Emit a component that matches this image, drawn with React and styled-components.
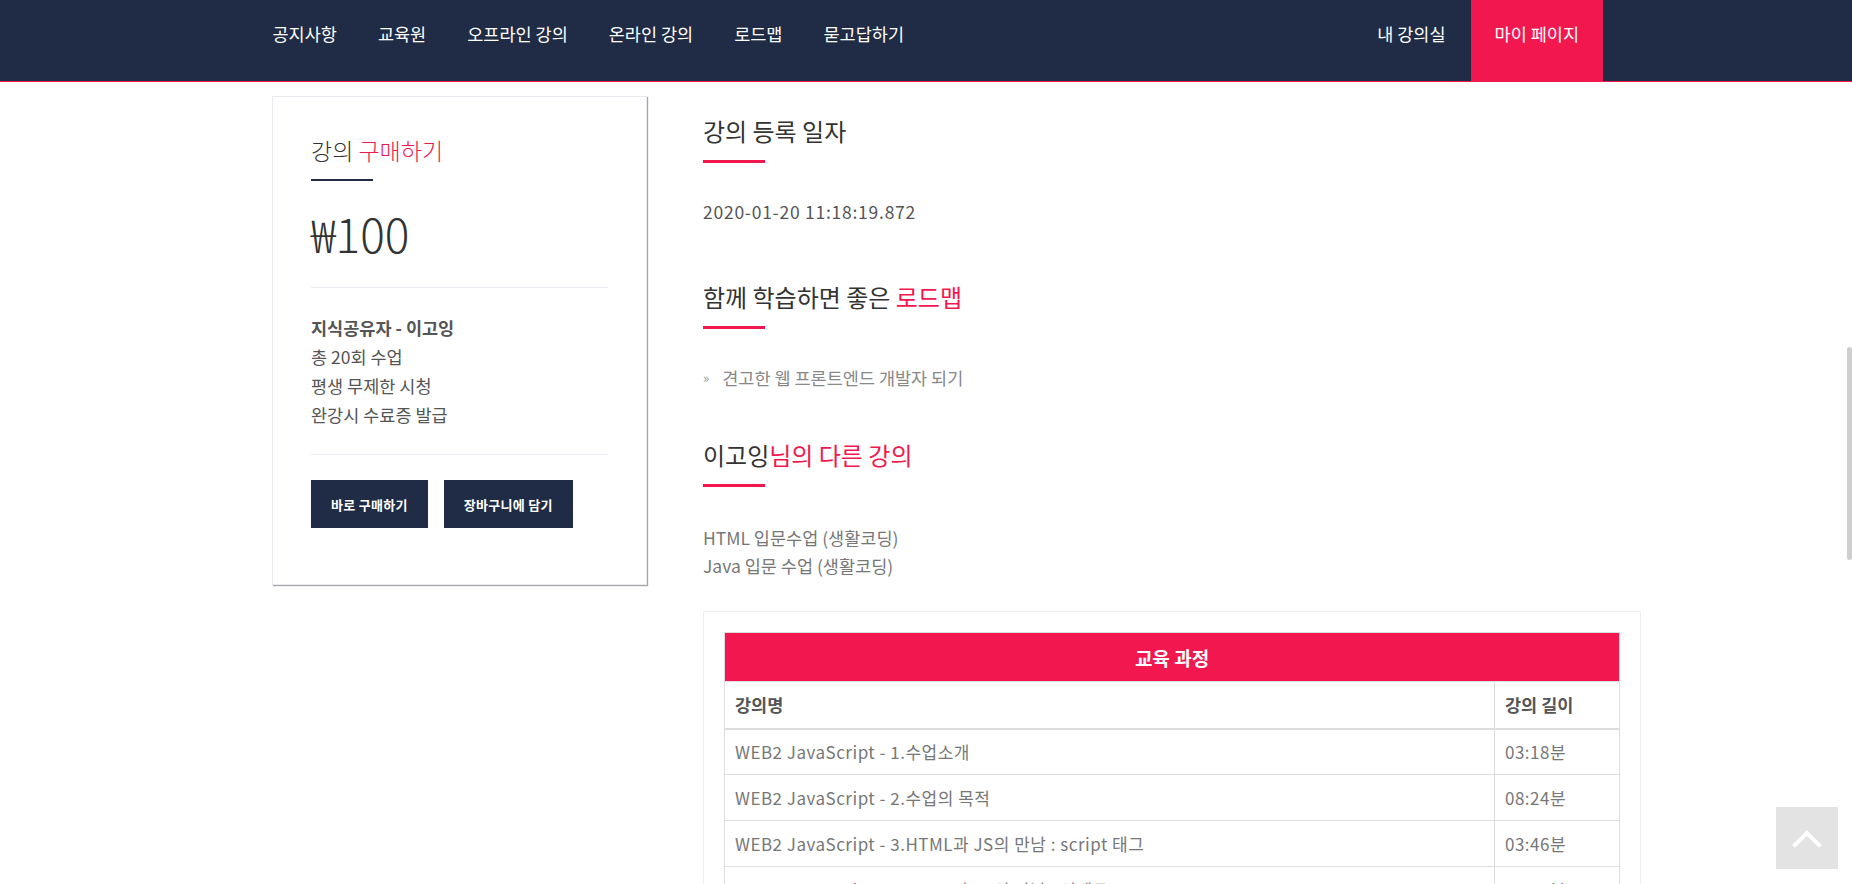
import React from "react";
import styled, { createGlobalStyle } from "styled-components";

const NAVY = "#202c46";
const PINK = "#f2184f";
const FONT = `"Noto Sans CJK KR", "Noto Sans", "Liberation Sans", sans-serif`;

const Global = createGlobalStyle`
  html { scrollbar-width: none; }
  html::-webkit-scrollbar, body::-webkit-scrollbar { width: 0; height: 0; display: none; }
  body {
    margin: 0;
    background: #fff;
    font-family: ${FONT};
    color: #333;
  }
  * { box-sizing: border-box; }
`;

/* ---------- top bar ---------- */
const Header = styled.header`
  height: 82px;
  background: ${NAVY};
  border-bottom: 1px solid ${PINK};
  display: flex;
  justify-content: space-between;
  padding: 0 249px 0 252px;
`;

const Nav = styled.nav`
  display: flex;
  height: 81px;
`;

const NavItem = styled.a`
  display: block;
  height: 81px;
  padding: 22px ${(p) => p.$pad || 20.5}px 0;
  font-size: 17.5px;
  line-height: 24px;
  color: #fff;
  text-decoration: none;
  white-space: nowrap;
  background: ${(p) => (p.$active ? PINK : "transparent")};
  margin-right: ${(p) => (p.$tight ? "5px" : "0")};
`;

/* ---------- page body ---------- */
const Main = styled.main`
  display: flex;
  align-items: flex-start;
  gap: 56px;
  padding: 14px 0 0 272px;
`;

const BuyCard = styled.aside`
  flex: none;
  width: 375px;
  border: 1px solid #e9e9ef;
  box-shadow: 1px 1px 1px rgba(0, 0, 0, 0.35);
  padding: 38px 38px 56px;
  background: #fff;
`;

const CardTitle = styled.h2`
  margin: 0;
  font-size: 23px;
  line-height: 30px;
  font-weight: 300;
  color: #333;
`;

const Accent = styled.span`
  color: ${PINK};
`;

const Bar = styled.div`
  width: 62px;
  height: ${(p) => p.$h || 3}px;
  margin-top: ${(p) => p.$mt || 14}px;
  background: ${(p) => p.$color || PINK};
`;

const Price = styled.div`
  margin-top: 27px;
  font-size: 46px;
  line-height: 50px;
  font-weight: 300;
  color: #333;
`;

const Divider = styled.hr`
  margin: ${(p) => p.$mt}px 0 0;
  border: 0;
  border-top: 1px solid #ececf2;
`;

const InfoList = styled.ul`
  list-style: none;
  margin: 25px 0 0;
  padding: 0;
`;

const InfoItem = styled.li`
  font-size: 17.5px;
  line-height: 29px;
  color: #555;
  font-weight: ${(p) => (p.$strong ? 700 : 400)};
`;

const Buttons = styled.div`
  display: flex;
  gap: 16px;
  margin-top: 25px;
`;

const DarkButton = styled.button`
  height: 48px;
  padding: 0 20px;
  border: 0;
  background: ${NAVY};
  color: #fff;
  font-family: ${FONT};
  font-size: 13px;
  font-weight: 700;
  letter-spacing: 0.3px;
  cursor: pointer;
`;

/* ---------- detail column ---------- */
const Detail = styled.section`
  flex: none;
  width: 938px;
  padding-top: 20px;
`;

const Block = styled.div`
  margin-bottom: ${(p) => p.$mb || 0}px;
`;

const Heading = styled.h3`
  margin: 0;
  font-size: 24px;
  line-height: 30px;
  font-weight: 400;
  color: #333;
`;

const BlockBody = styled.div`
  margin-top: ${(p) => p.$mt || 37}px;
  font-size: 17.5px;
  line-height: ${(p) => p.$lh || 24}px;
  color: ${(p) => p.$color || "#555"};
  letter-spacing: ${(p) => p.$ls || 0}px;
`;

const LinkLine = styled.div`
  display: flex;
  align-items: center;
  gap: 13px;
  color: #888;
`;

const Chevrons = styled.span`
  font-size: 13px;
  color: #999;
`;

const CourseLink = styled.div`
  color: #777;
`;

/* ---------- curriculum table ---------- */
const TableBox = styled.div`
  margin-top: 31px;
  border: 1px solid #ededf2;
  padding: 20px;
`;

const Table = styled.table`
  width: 100%;
  border-collapse: collapse;
  border: 1px solid #ddd;
`;

const Caption = styled.th`
  height: 49px;
  background: ${PINK};
  color: #fff;
  font-size: 19px;
  font-weight: 700;
  text-align: center;
  border: 1px solid #ddd;
`;

const HeadCell = styled.th`
  height: 47px;
  padding: 0 10px;
  text-align: left;
  font-size: 17.5px;
  color: #555;
  font-weight: 700;
  border: 1px solid #ddd;
  border-bottom: 2px solid #ddd;
  width: ${(p) => p.$w || "auto"};
`;

const Cell = styled.td`
  height: 46px;
  padding: 0 10px;
  font-size: 17px;
  letter-spacing: 0.5px;
  color: #777;
  border: 1px solid #ddd;
`;

/* ---------- floating controls ---------- */
const TopButton = styled.button`
  position: fixed;
  right: 14px;
  bottom: 15px;
  width: 62px;
  height: 62px;
  border: 0;
  background: #e3e3e3;
  display: flex;
  align-items: center;
  justify-content: center;
  cursor: pointer;
`;

const ScrollThumb = styled.div`
  position: fixed;
  top: 347px;
  right: 0;
  width: 5px;
  height: 213px;
  border-radius: 3px;
  background: #cfcfcf;
`;

const lessons = [
  ["WEB2 JavaScript - 1.수업소개", "03:18분"],
  ["WEB2 JavaScript - 2.수업의 목적", "08:24분"],
  ["WEB2 JavaScript - 3.HTML과 JS의 만남 : script 태그", "03:46분"],
  ["WEB2 JavaScript - 4.HTML과 JS의 만남 : 이벤트", "06:10분"],
  ["WEB2 JavaScript - 5.HTML과 JS의 만남 : 콘솔", "05:32분"],
  ["WEB2 JavaScript - 6.데이터타입 - 문자열과 숫자", "11:05분"],
];

export default function App() {
  return (
    <>
      <Global />
      <Header>
        <Nav>
          <NavItem href="#">공지사항</NavItem>
          <NavItem href="#">교육원</NavItem>
          <NavItem href="#">오프라인 강의</NavItem>
          <NavItem href="#">온라인 강의</NavItem>
          <NavItem href="#">로드맵</NavItem>
          <NavItem href="#">묻고답하기</NavItem>
        </Nav>
        <Nav>
          <NavItem href="#" $pad={20} $tight>내 강의실</NavItem>
          <NavItem href="#" $pad={24} $active>마이 페이지</NavItem>
        </Nav>
      </Header>

      <Main>
        <BuyCard>
          <CardTitle>
            강의 <Accent>구매하기</Accent>
          </CardTitle>
          <Bar $color={NAVY} $h={2} $mt={14} />
          <Price>₩100</Price>
          <Divider $mt={29} />
          <InfoList>
            <InfoItem $strong>지식공유자 - 이고잉</InfoItem>
            <InfoItem>총 20회 수업</InfoItem>
            <InfoItem>평생 무제한 시청</InfoItem>
            <InfoItem>완강시 수료증 발급</InfoItem>
          </InfoList>
          <Divider $mt={25} />
          <Buttons>
            <DarkButton>바로 구매하기</DarkButton>
            <DarkButton>장바구니에 담기</DarkButton>
          </Buttons>
        </BuyCard>

        <Detail>
          <Block $mb={58}>
            <Heading>강의 등록 일자</Heading>
            <Bar />
            <BlockBody $ls={0.75}>2020-01-20 11:18:19.872</BlockBody>
          </Block>

          <Block $mb={50}>
            <Heading>
              함께 학습하면 좋은 <Accent>로드맵</Accent>
            </Heading>
            <Bar />
            <BlockBody>
              <LinkLine>
                <Chevrons>»</Chevrons>
                <span>견고한 웹 프론트엔드 개발자 되기</span>
              </LinkLine>
            </BlockBody>
          </Block>

          <Block>
            <Heading>
              이고잉<Accent>님의 다른 강의</Accent>
            </Heading>
            <Bar />
            <BlockBody $mt={37} $lh={28} $color="#777">
              <CourseLink>HTML 입문수업 (생활코딩)</CourseLink>
              <CourseLink>Java 입문 수업 (생활코딩)</CourseLink>
            </BlockBody>
          </Block>

          <TableBox>
            <Table>
              <thead>
                <tr>
                  <Caption colSpan={2}>교육 과정</Caption>
                </tr>
                <tr>
                  <HeadCell>강의명</HeadCell>
                  <HeadCell $w="125px">강의 길이</HeadCell>
                </tr>
              </thead>
              <tbody>
                {lessons.map(([name, len]) => (
                  <tr key={name}>
                    <Cell>{name}</Cell>
                    <Cell>{len}</Cell>
                  </tr>
                ))}
              </tbody>
            </Table>
          </TableBox>
        </Detail>
      </Main>

      <ScrollThumb />
      <TopButton aria-label="맨 위로">
        <svg width="30" height="20" viewBox="0 0 30 20" fill="none">
          <polyline
            points="3,17 15,5 27,17"
            stroke="#fff"
            strokeWidth="4"
            strokeLinecap="square"
          />
        </svg>
      </TopButton>
    </>
  );
}
